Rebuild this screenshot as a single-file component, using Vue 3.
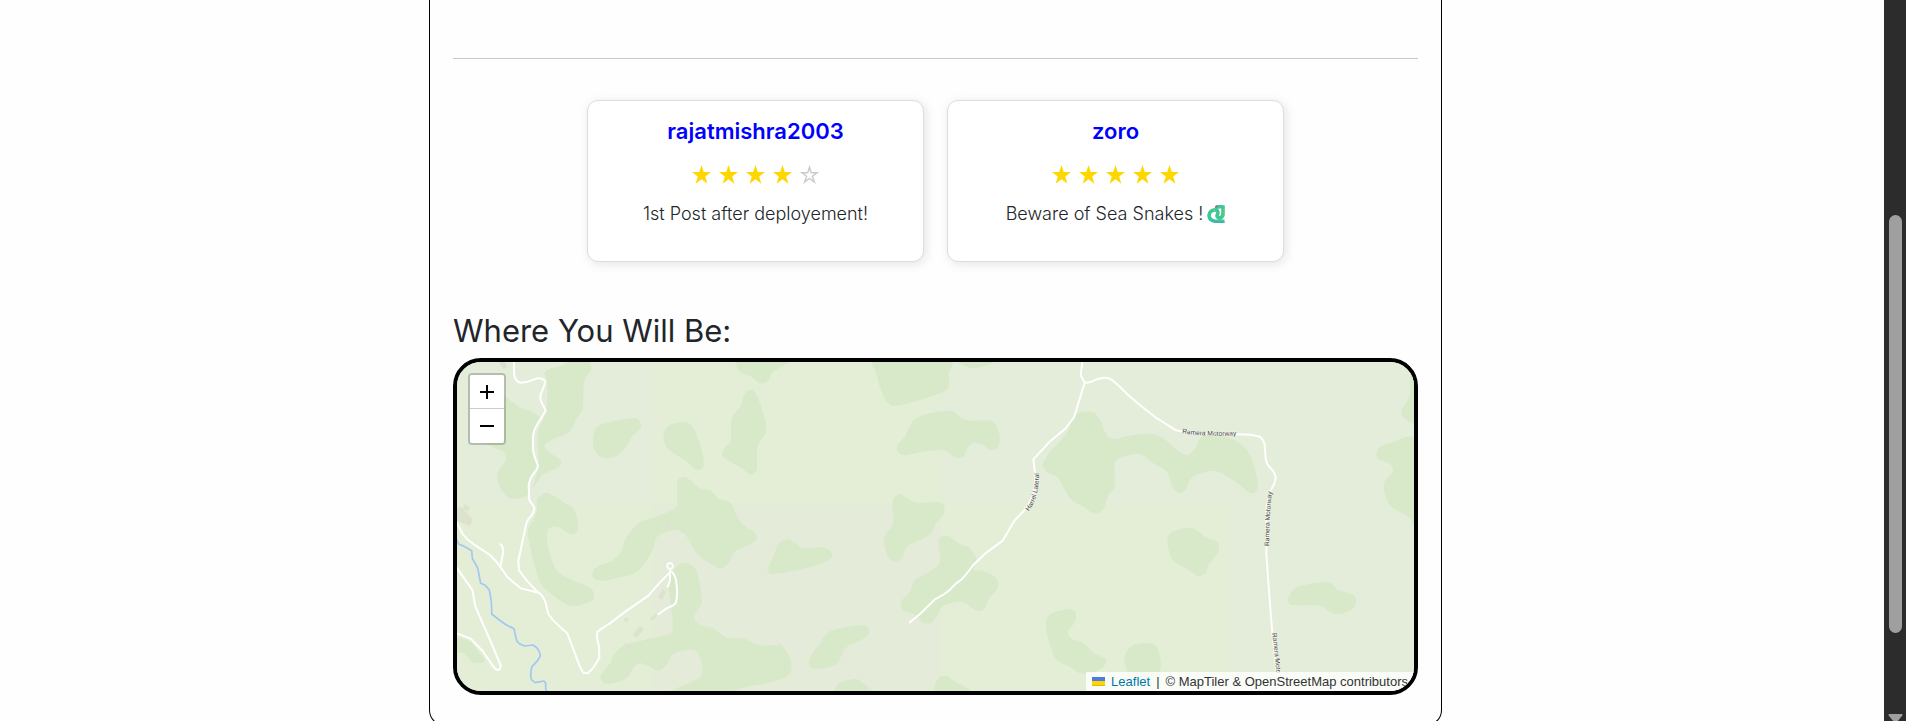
<script setup>
const reviews = [
  { user: 'rajatmishra2003', rating: 4, comment: '1st Post after deployement!', snake: false },
  { user: 'zoro', rating: 5, comment: 'Beware of Sea Snakes !', snake: true },
]

// Closed or open Catmull-Rom curve through "x,y x,y ..." points
function smooth(text, closed = true) {
  const p = text.trim().split(/\s+/).map((s) => s.split(',').map(Number))
  const n = p.length
  const at = (i) => (closed ? p[(i + n) % n] : p[Math.max(0, Math.min(n - 1, i))])
  let d = `M${p[0]}`
  for (let i = 0; i < (closed ? n : n - 1); i++) {
    const [a, b, c, e] = [at(i - 1), at(i), at(i + 1), at(i + 2)]
    d += `C${b[0] + (c[0] - a[0]) / 6} ${b[1] + (c[1] - a[1]) / 6} ${c[0] - (e[0] - b[0]) / 6} ${c[1] - (e[1] - b[1]) / 6} ${c[0]} ${c[1]}`
  }
  return closed ? d + 'Z' : d
}

const tiles = [
  { x: 0, y: 0, w: 640, h: 493, c: '#e4edda' },
  { x: 640, y: 0, w: 864, h: 493, c: '#e4eed7' },
  { x: 1504, y: 0, w: 864, h: 493, c: '#e4edd9' },
  { x: 2368, y: 0, w: 640, h: 493, c: '#e4edd9' },
  { x: 0, y: 493, w: 640, h: 640, c: '#e4eed7' },
  { x: 640, y: 493, w: 864, h: 640, c: '#e5ebd9' },
  { x: 1504, y: 493, w: 864, h: 640, c: '#e4eed7' },
  { x: 2368, y: 493, w: 640, h: 640, c: '#e4edd9' },
]

const woodGroups = [
  {
    shift: 0,
    shapes: [
      '370,75 410,50 446,60 453,90 432,125 428,205 408,238 390,275 345,295 314,316 330,340 360,358 358,380 310,403 280,440 295,380 292,310 295,270 318,215 322,130 313,100 330,86',
      '190,172 215,185 245,205 272,214 298,235 280,285 280,340 292,378 270,410 262,465 215,476 188,455 172,415 180,385 197,360 190,335 160,322 120,290 140,220',
      '292,478 318,458 345,470 375,490 398,504 412,535 415,565 405,582 383,578 362,565 340,560 323,572 321,600 332,650 350,690 385,715 420,730 455,748 462,768 450,785 400,798 365,785 320,750 300,725 285,680 268,610 264,570 280,540 290,510',
      '460,290 470,262 500,248 560,236 592,236 603,255 592,275 575,290 555,325 525,350 485,352 462,325',
      '671,285 685,258 720,247 750,252 768,280 782,320 791,360 788,385 765,388 742,365 690,332 674,310',
      '875,235 900,200 915,160 935,150 952,170 970,220 978,275 952,320 950,390 930,403 905,385 872,365 848,348 852,325 872,300',
      '886,66 900,96 930,108 960,130 985,122 1000,95 1045,68 1080,40 890,40',
      '712,425 732,410 755,423 775,443 810,450 835,475 872,490 895,535 915,560 945,578 948,600 925,615 885,635 865,670 842,686 820,675 780,650 755,615 735,583 710,570 680,575 650,592 638,630 615,670 585,700 540,712 490,722 462,715 458,695 475,678 520,660 545,630 555,600 580,565 605,543 650,530 705,505 712,480',
      '685,720 710,680 740,668 768,690 780,735 785,790 762,830 780,855 820,865 860,893 910,895 960,916 1020,918 1048,950 1050,1000 1000,1025 900,1045 800,1085 630,1080 720,1040 780,1010 785,970 770,935 740,930 700,942 680,975 655,992 630,980 600,970 580,985 560,1015 520,1030 490,1028 482,1005 510,970 525,940 555,915 620,898 690,880 698,850 690,780',
      '51,895 90,905 120,940 135,965 100,968 70,940 40,935',
      '983,685 1000,650 1015,612 1042,598 1065,608 1090,624 1150,622 1175,640 1170,658 1130,675 1075,690 1000,702 985,695',
      '1015,918 1040,945 1052,980 1045,1005 1010,1018 980,980',
    ],
  },
  {
    shift: 1020,
    shapes: [
      '290,40 507,40 507,100 506,140 480,160 420,180 350,197 325,190 305,155 292,110',
      '540,62 560,80 590,83 640,68 650,50',
      '385,265 405,237 450,220 515,214 545,235 570,242 632,242 650,260 659,295 652,325 630,330 605,313 580,309 562,325 550,350 525,352 490,331 430,335 370,345 352,330 355,310 375,290',
      '338,485 358,462 380,473 410,488 470,486 490,495 492,520 468,550 450,583 415,602 380,620 365,655 345,665 325,652 312,610 318,582 340,550',
      '475,605 490,588 510,590 540,612 570,625 590,660 580,690 605,692 645,710 654,740 628,775 612,808 590,812 545,786 490,798 472,825 455,848 430,848 405,825 370,810 363,785 390,755 405,720 440,700 475,675 480,650',
      '88,960 100,935 118,915 132,890 160,870 240,855 265,865 264,885 240,902 198,923 175,965 150,980 100,986 88,975',
      '-5,915 15,930 30,965 30,995 5,1012 -30,1015',
      '163,1050 180,1028 225,1017 248,1028 265,1043 290,1065 160,1080',
      '462,1052 475,1015 500,1008 525,1025 560,1043 580,1070 465,1080',
      '800,835 825,816 875,808 888,825 882,850 864,878 878,898 910,910 940,938 975,955 975,975 940,998 900,1000 870,980 830,960 810,915 799,870',
      '885,225 935,216 960,240 980,285 1005,297 1045,288 1110,281 1150,295 1190,330 1222,345 1245,325 1265,290 1300,275 1370,305 1400,330 1420,370 1433,440 1412,460 1380,435 1340,408 1305,393 1255,402 1230,420 1215,450 1195,458 1175,435 1160,395 1120,370 1080,343 1030,350 1005,370 1003,440 985,465 968,510 940,520 910,500 870,475 835,415 800,395 789,370 815,330 860,280',
    ],
  },
  {
    shift: 1920,
    shapes: [
      '262,598 280,574 330,563 355,574 375,590 410,605 417,625 405,650 385,675 378,698 355,708 330,692 290,670 272,650',
      '625,775 645,745 690,732 748,728 775,750 820,765 829,788 810,812 770,822 740,810 715,796 640,795 625,785',
      '135,945 155,918 200,909 230,920 242,965 238,1000 215,1020 160,1012 138,985',
      '992,100 990,165 965,210 972,233 1010,250 1030,200 1020,100',
      '890,340 900,322 940,306 1010,296 1060,420 1010,550 985,530 935,500 915,465 914,425 938,395 930,372 895,358',
    ],
  },
]
const woods = woodGroups.flatMap((g) => g.shapes.map((s) => ({ shift: g.shift, d: smooth(s) })))

const buildings = [
  'M176,66 l14,22 l12,-7 l-8,-15z',
  'M50,505 l12,-6 l38,40 l-12,20 l-38,-18z',
  'M74,492 l17,11 l-7,12 l-16,-10z',
  'M682,550 l7,-4 l1,22 l-8,4z',
  'M654,772 l14,-25 l10,8 l-12,25z',
  'M630,835 l18,-13 l4,7 l-17,13z',
  'M551,840 l8,-8 l8,6 l-9,9z',
  'M578,884 l23,-27 l11,9 l-22,28z',
  'M553,910 l21,6 l-4,11 l-17,-10z',
]

const roads = [
  'M222,60 L222,100 Q224,125 242,128 Q262,128 282,118 Q304,110 314,122 Q317,130 308,148 Q296,172 304,186 L317,212 L300,240 Q280,268 279,290 L279,330 Q284,355 294,378 Q292,388 280,402 Q266,422 266,440 L268,480 L283,502 Q284,516 272,530 Q260,540 257,560 L235,662 L237,690 Q260,726 296,758 Q312,770 317,790 L325,822 Q340,845 382,880 L416,970 Q424,992 432,999 L444,999 Q460,988 478,953 L477,920 Q469,895 472,876 Q480,868 510,850 L552,818 L625,767 L660,727 L689,698',
  'M44,535 L68,582 Q80,598 100,612 L150,645 Q170,665 182,682 L202,711 L242,745 L296,758',
  'M182,613 Q190,620 189,640 L181,680',
  'M50,683 L97,750 L106,800 L158,918 L181,974 Q183,988 175,990 Q168,991 158,977 L128,933 L92,896 L50,880',
  'M689,692 Q708,700 710,735 Q713,765 708,788 L698,797 Q680,802 655,823',
  'M689,698 Q693,722 683,740',
  'M1928,60 L1922,105 L1934,128 L1902,232 L1875,267 L1830,304 L1780,358 L1785,400 Q1792,465 1752,512 L1723,542 L1688,602 L1635,641 L1600,675 Q1580,702 1565,718 L1543,735 Q1530,752 1513,762 L1485,778 L1440,822 L1410,847',
  'M1934,128 Q1946,130 1968,119 Q1998,108 2014,119 Q2027,127 2060,161 Q2100,196 2145,231 L2208,271 L2250,280 L2390,283 L2432,284 L2460,290 Q2472,300 2474,315 L2477,355 Q2480,375 2490,382 Q2507,400 2507,415 Q2505,430 2490,455 L2480,500 L2479,640 Q2487,760 2497,880 L2518,1060',
]

const labels = [
  { id: 'harrel', d: 'M1766,514 Q1798,475 1797,395', text: 'Harrel Lateral' },
  { id: 'ramera-a', d: 'M2226,280 Q2290,290 2400,286', text: 'Ramera Motorway' },
  { id: 'ramera-b', d: 'M2488,618 Q2487,530 2498,440', text: 'Ramera Motorway' },
  { id: 'ramera-c', d: 'M2496,880 Q2508,960 2515,1090', text: 'Ramera Moto' },
]
</script>

<template>
  <div class="window">
    <div class="page">
      <main class="listing">
        <hr class="rule" />

        <section class="reviews" aria-label="Reviews">
          <article v-for="r in reviews" :key="r.user" class="card">
            <h2 class="user">{{ r.user }}</h2>
            <div class="stars" role="img" :aria-label="`${r.rating} out of 5 stars`">
              <svg v-for="n in 5" :key="n" viewBox="0 0 19 19">
                <path
                  v-if="n <= r.rating"
                  class="star-on"
                  d="M9.5 0 11.8 7H19l-5.8 4.4 2.2 7.3-5.9-4.4-5.9 4.4 2.2-7.3L0 7h7.2z"
                />
                <path
                  v-else
                  class="star-off"
                  d="M9.5 2.2 11.300 7.700H17.200l-4.800 3.500 1.900 5.800-4.800-3.600-4.800 3.600 1.900-5.800-4.800-3.500h5.900z"
                />
              </svg>
            </div>
            <p class="comment">
              {{ r.comment }}
              <svg v-if="r.snake" class="snake" viewBox="0 0 18 18" role="img" aria-label="Snake">
                <path class="body" d="M9 2.200Q13 1.200 16 2V9.500Q15 13.400 11.500 12.600 9 11.500 10.800 8.800 11.500 5 8 4.800 2.500 5.500 2 10.500 2.500 15.500 8 16.200H17.500" />
                <path class="belly" d="M4 14.500Q7 17.300 17.500 17.300" />
                <path class="spots" d="M17 4v8M7 5l2 .5" />
                <path class="tongue" d="M8 2.500l2-1.500" />
              </svg>
            </p>
          </article>
        </section>

        <h1 class="where">Where You Will Be:</h1>

        <section class="map" aria-label="Map">
          <svg class="canvas" viewBox="51 66 2871 987" preserveAspectRatio="xMidYMid slice">
            <rect
              v-for="(t, i) in tiles"
              :key="'t' + i"
              :x="t.x"
              :y="t.y"
              :width="t.w"
              :height="t.h"
              :fill="t.c"
              shape-rendering="crispEdges"
            />
            <path
              v-for="(w, i) in woods"
              :key="'w' + i"
              class="wood"
              :d="w.d"
              :transform="`translate(${w.shift})`"
            />
            <path v-for="b in buildings" :key="b" class="building" :d="b" />
            <path
              class="river"
              d="M48,595 L56,612 L75,620 L95,632 L97,655 L113,684 L122,730 L133,734 L147,748 Q156,780 155,822 L178,840 Q198,856 222,866 L228,894 Q230,906 238,911 L254,918 L278,915 Q296,922 301,945 Q298,960 276,979 Q270,1000 274,1019 L286,1028 L312,1023 L317,1030 L317,1046 L323,1060"
            />
            <path v-for="r in roads" :key="r" class="road" :d="r" />
            <circle class="loop" cx="690" cy="678" r="8.500" />
            <g v-for="l in labels" :key="l.id">
              <path :id="l.id" class="guide" :d="l.d" />
              <text class="road-name">
                <textPath :href="'#' + l.id">{{ l.text }}</textPath>
              </text>
            </g>
          </svg>

          <div class="zoom">
            <button type="button" aria-label="Zoom in">
              <svg viewBox="0 0 14 14"><path d="M0 7h14M7 0v14" /></svg>
            </button>
            <button type="button" aria-label="Zoom out">
              <svg viewBox="0 0 14 14"><path d="M0 7h14" /></svg>
            </button>
          </div>

          <div class="attribution">
            <svg class="flag" viewBox="0 0 13 9" aria-hidden="true">
              <path fill="#4c7be1" d="M0 0h13v4H0z" />
              <path fill="#ffd500" d="M0 4h13v4H0z" />
              <path fill="#e0bc00" d="M0 8h13v1H0z" />
            </svg>
            <a href="#">Leaflet</a>
            <span>|</span>
            <span>© MapTiler &amp; OpenStreetMap contributors</span>
          </div>
        </section>
      </main>
    </div>

    <div class="scrollbar" aria-hidden="true">
      <div class="thumb"></div>
      <svg class="arrow" viewBox="0 0 15 10"><path d="M1 0h13q1 1 0 2L9 8q-1.500 1-3 0L1 2q-1-1 0-2z" /></svg>
    </div>
  </div>
</template>

<style>
body {
  background: #fefefe;
}
</style>

<style scoped>
.window {
  display: flex;
  height: 100vh;
  overflow: hidden;
  font-family: Inter, 'Open Sans', sans-serif;
  color: #222529;
}
.page {
  flex: 1;
  display: grid;
  grid-template-columns: 429fr 1013fr 442fr;
  align-items: start;
}
.listing {
  grid-column: 2;
  box-sizing: border-box;
  min-width: 0;
  padding: 58px 23px 30px;
  border: 1px solid #000;
  border-top: 0;
  border-radius: 0 0 16px 16px;
}
.rule {
  margin: 0;
  border: 0;
  border-top: 1px solid #c8c8c8;
}
.reviews {
  display: flex;
  justify-content: center;
  gap: 23px;
  margin-top: 41px;
}
.card {
  box-sizing: border-box;
  width: 337px;
  min-height: 162px;
  padding: 16px;
  border: 1px solid #ddd;
  border-radius: 11px;
  background: #fff;
  box-shadow: 2px 2px 11px rgba(0, 0, 0, 0.1);
  text-align: center;
}
.user {
  margin: 0;
  font-size: 22px;
  line-height: 28px;
  font-weight: 600;
  color: #00f;
}
.stars {
  display: flex;
  justify-content: center;
  gap: 8px;
  margin-top: 20px;
}
.stars svg {
  width: 19px;
  height: 19px;
}
.star-on {
  fill: #ffd700;
}
.star-off {
  fill: none;
  stroke: #ccc;
  stroke-width: 1.5;
}
.comment {
  display: flex;
  justify-content: center;
  align-items: center;
  gap: 4px;
  margin: 16px 0 0;
  font-size: 18px;
  line-height: 27px;
  font-weight: 300;
  color: #222529;
}
.snake {
  width: 18px;
  height: 18px;
}
.snake path {
  fill: none;
}
.snake .body {
  stroke: #41c695;
  stroke-width: 3.6;
}
.snake .belly {
  stroke: #4aa9b8;
  stroke-width: 1.2;
}
.snake .spots {
  stroke: #b6d84b;
  stroke-dasharray: 1 2;
}
.snake .tongue {
  stroke: #c93a55;
  stroke-width: 1.5;
}
.where {
  margin: 49px 0 8px;
  font-size: 31px;
  line-height: 39px;
  font-weight: 400;
}
.map {
  position: relative;
  aspect-ratio: 957 / 329;
  border: 4px solid #000;
  border-radius: 28px;
  overflow: hidden;
}
.canvas {
  display: block;
  width: 100%;
  height: 100%;
}
.wood {
  fill: #d7e9c9;
}
.building {
  fill: #dde2cf;
}
.river,
.road,
.loop {
  fill: none;
  stroke-linejoin: round;
  stroke-linecap: round;
}
.river {
  stroke: #a0c8f0;
  stroke-width: 5;
}
.road {
  stroke: #fff;
  stroke-width: 6;
}
.loop {
  stroke: #fff;
  stroke-width: 5;
}
.guide {
  fill: none;
}
.road-name {
  font-family: 'Liberation Sans', Arial, sans-serif;
  font-size: 20px;
  fill: #444;
  stroke: #f4f7ef;
  stroke-width: 3;
  paint-order: stroke;
}
.zoom {
  position: absolute;
  top: 11px;
  left: 11px;
  border: 2px solid rgba(0, 0, 0, 0.2);
  border-radius: 4px;
  background-clip: padding-box;
}
.zoom button {
  display: flex;
  align-items: center;
  justify-content: center;
  box-sizing: border-box;
  width: 34px;
  height: 34px;
  padding: 0;
  border: 0;
  background: #fff;
  border-radius: 0 0 2px 2px;
}
.zoom button:first-child {
  border-bottom: 1px solid #ccc;
  border-radius: 2px 2px 0 0;
}
.zoom svg {
  width: 14px;
  height: 14px;
}
.zoom path {
  stroke: #000;
  stroke-width: 2;
}
.attribution {
  position: absolute;
  right: 0;
  bottom: 0;
  display: flex;
  align-items: center;
  gap: 6px;
  padding: 0 6px;
  background: rgba(255, 255, 255, 0.8);
  font-family: 'Liberation Sans', Arial, sans-serif;
  font-size: 13px;
  line-height: 19px;
  color: #333;
  white-space: nowrap;
}
.attribution a {
  color: #0078a8;
  text-decoration: none;
}
.flag {
  width: 13px;
  height: 9px;
}
.scrollbar {
  display: flex;
  flex-direction: column;
  align-items: center;
  justify-content: space-between;
  box-sizing: border-box;
  width: 22px;
  padding-top: 215px;
  background: #2c2c2c;
}
.thumb {
  width: 13px;
  height: 58vh;
  border-radius: 7px;
  background: #9f9f9f;
}
.arrow {
  width: 15px;
  height: 10px;
  margin-bottom: -3px;
  fill: #9f9f9f;
}
</style>
